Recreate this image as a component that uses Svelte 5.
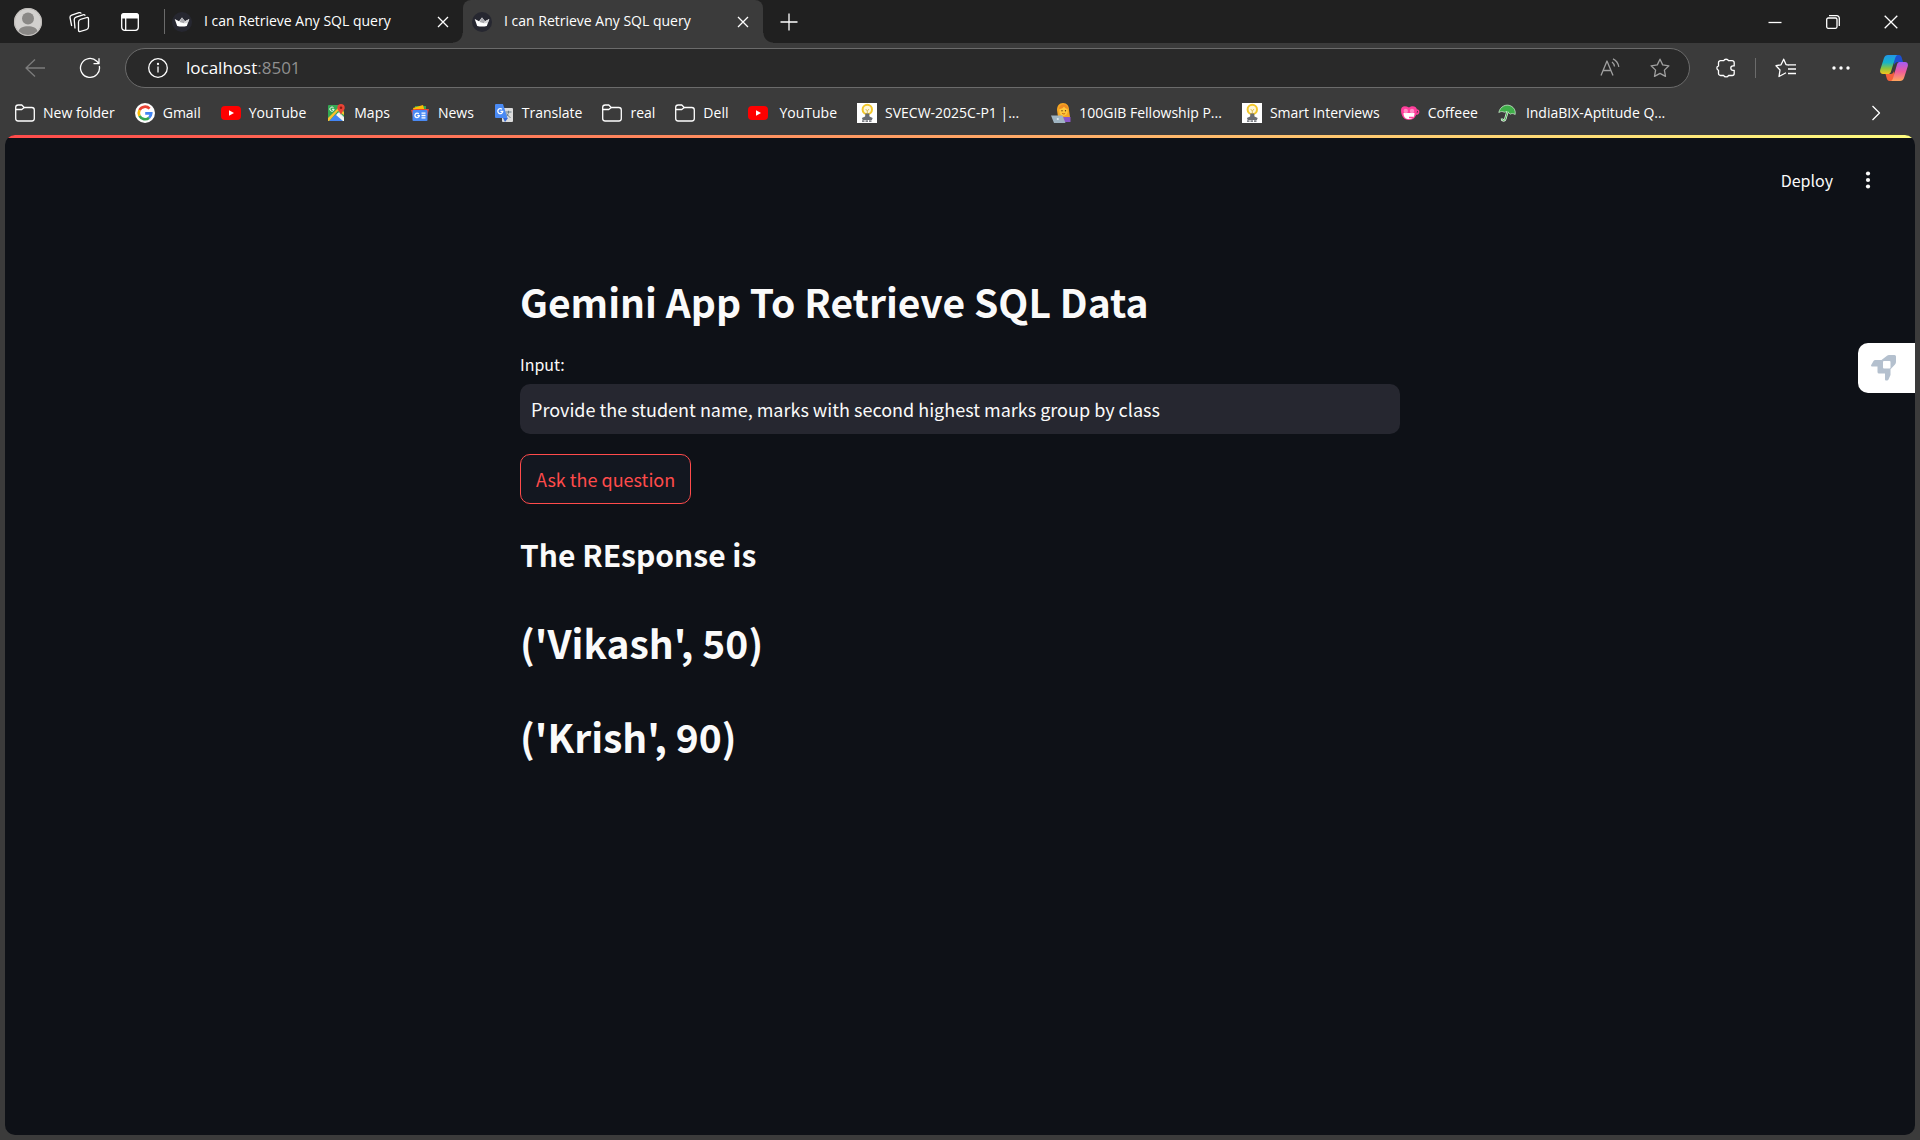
<script>
  let query = $state('Provide the student name, marks with second highest marks group by class');

  const tabs = [
    { title: 'I can Retrieve Any SQL query', active: false },
    { title: 'I can Retrieve Any SQL query', active: true }
  ];

  const bookmarks = [
    { icon: 'folder', label: 'New folder' },
    { icon: 'google', label: 'Gmail' },
    { icon: 'youtube', label: 'YouTube' },
    { icon: 'maps', label: 'Maps' },
    { icon: 'news', label: 'News' },
    { icon: 'translate', label: 'Translate' },
    { icon: 'folder', label: 'real' },
    { icon: 'folder', label: 'Dell' },
    { icon: 'youtube', label: 'YouTube', spaced: true },
    { icon: 'bulb', label: 'SVECW-2025C-P1 |...', wide: true },
    { icon: 'coder', label: '100GIB Fellowship P...' },
    { icon: 'bulb', label: 'Smart Interviews' },
    { icon: 'coffee', label: 'Coffeee' },
    { icon: 'umbrella', label: 'IndiaBIX-Aptitude Q...' }
  ];

  const rows = ["('Vikash', 50)", "('Krish', 90)"];
</script>

{#snippet close()}
  <svg width="12" height="12" viewBox="0 0 12 12" class="line"><path d="M1 1l10 10M11 1L1 11" /></svg>
{/snippet}

{#snippet crown()}
  <svg width="20" height="20" viewBox="0 0 20 20">
    <circle cx="10" cy="10" r="10" fill="#262730" />
    <path d="M2.700 7l4.300 2.200L10 5.500l3 3.700L17.300 7l-2.500 7c-3 .8-6.600.8-9.600 0z" fill="#fff" />
    <path d="M10 5.500l3 3.700-1 2-4.500-1.200z" fill="#a9a9ae" />
    <path d="M13 9.200L17.300 7l-1.300 3.800-4 .6z" fill="#d4d4d7" />
  </svg>
{/snippet}

{#snippet siteIcon(name)}
  <svg width="20" height="20" viewBox="0 0 20 20" aria-hidden="true">
    {#if name === 'folder'}
      <g class="line">
        <path d="M.7 4.500a2.500 2.500 0 0 1 2.500-2.500h3.600l2.400 2.500h7.600a2.500 2.500 0 0 1 2.500 2.500v8.500a2.500 2.500 0 0 1-2.500 2.500H3.200a2.500 2.500 0 0 1-2.500-2.500z" />
        <path d="M.7 6.500h6.100l2.400-2" />
      </g>
    {:else if name === 'google'}
      <circle cx="10" cy="10" r="10" fill="#fff" />
      <g fill="none" stroke-width="2.700">
        <path d="M14.600 5.700A6.200 6.200 0 0 0 4.500 7.200" stroke="#ea4335" />
        <path d="M4.500 7.200a6.200 6.200 0 0 0 0 5.700" stroke="#fbbc05" />
        <path d="M4.500 12.900a6.200 6.200 0 0 0 9.600 1.800" stroke="#34a853" />
        <path d="M14.100 14.700a6.200 6.200 0 0 0 2.100-4.300H10.200" stroke="#4285f4" />
      </g>
    {:else if name === 'youtube'}
      <rect y="3" width="20" height="14" rx="4" fill="#f00" />
      <path d="M8 7.200v5.600l5-2.800z" fill="#fff" />
    {:else if name === 'maps'}
      <rect x="2" y="2" width="16" height="16" rx="1" fill="#34a853" />
      <path d="M3 18l7-7 7 7z" fill="#4285f4" />
      <path d="M2 15L13 4l5 5v3L12 8 3 18H2z" fill="#fbc02d" />
      <path d="M11 11l2-2 5 5v3z" fill="#e8eaed" />
      <path d="M10 12l7 6h1v-2l-6-6z" fill="#f5f5f5" />
      <path d="M15 1a3.700 3.700 0 0 0-3.700 3.700c0 2.500 2.700 3.500 3.700 7.300 1-3.800 3.700-4.800 3.700-7.300A3.700 3.700 0 0 0 15 1z" fill="#ea4335" />
      <circle cx="15" cy="4.700" r="1.300" fill="#8e1c14" />
      <path d="M7.500 4.700a2.100 2.100 0 1 0 .6 1.600H6" fill="none" stroke="#fff" />
    {:else if name === 'news'}
      <path d="M5 3l11 0v6H5z" fill="#34a853" />
      <path d="M3 5l10-3 2 7H4z" fill="#fbbc04" />
      <path d="M1 7l5-1 10 0 3 0-2 8H3z" fill="#ea4335" />
      <rect x="2.500" y="7" width="15" height="11" rx="1" fill="#4a8af4" />
      <path d="M8.800 11a2.200 2.200 0 1 0 .5 1.700H7.300M11.500 10.200h4M11.500 12.500h4M11.500 14.800h4" fill="none" stroke="#fff" stroke-width="1.300" />
    {:else if name === 'translate'}
      <rect x="8" y="5" width="11" height="14" rx="1" fill="#dcdcdc" />
      <path d="M11.500 9h6M14.500 7.800V9c0 2-1.500 4-3 5M12.500 10.500c1 2 2.500 3.300 4 4" fill="none" stroke="#667b86" />
      <path d="M9 15h5l-3 4z" fill="#3367d6" />
      <path d="M2 1h7l4.500 14H2a1 1 0 0 1-1-1V2a1 1 0 0 1 1-1z" fill="#4a8af4" />
      <path d="M8 6.300a2.500 2.500 0 1 0 .8 2H6.400" fill="none" stroke="#fff" stroke-width="1.300" />
    {:else if name === 'bulb'}
      <rect width="20" height="20" fill="#fff" />
      <circle cx="10.300" cy="6.500" r="4.700" fill="#fdf6d8" stroke="#f2c72c" stroke-width="2" />
      <path d="M8.700 6l1.600 2L12 6M10.300 8v4" fill="none" stroke="#d9bd5c" />
      <path d="M8.400 10.500h3.800l.3 3 3.200 1.500-.8 2H5.700l-.8-2 3.200-1.500z" fill="#696c72" />
      <path d="M5 18.200h10.500" stroke="#808389" stroke-width="1.800" stroke-dasharray="2.500 1" />
    {:else if name === 'coder'}
      <path d="M12 0c4 0 6 3 6 7l1 7H7L6 7c0-4 2-7 6-7z" fill="#f5a623" />
      <path d="M11 14h8.500v5H11z" fill="#8b57c8" />
      <ellipse cx="12.500" cy="8" rx="4.200" ry="5" fill="#ffc83d" />
      <path d="M8 6c3 0 4-1 5-2.500 1 1.500 2 2.200 4 2.500 0-3-2-4.500-4.500-4.500S8 3 8 6z" fill="#ee8b22" />
      <circle cx="11" cy="7.700" r=".7" fill="#5c3a12" /><circle cx="14.500" cy="7.700" r=".7" fill="#5c3a12" />
      <path d="M11.200 10.300c1 .8 2 .8 3 0" fill="none" stroke="#b85b10" />
      <path d="M0 12.500h11.500l3 7.500H3z" fill="#9fb4c2" />
      <circle cx="6.800" cy="16" r="1.100" fill="#dceaf2" />
    {:else if name === 'coffee'}
      <path d="M1 7c0-4 4-5 8-2.500C12 2 17 3 17 7c0 6-3 10-8 10S1 13 1 7z" fill="#ff3f9c" />
      <path d="M16.500 7c3-.5 3 4-.8 4" fill="none" stroke="#ff3f9c" stroke-width="1.500" />
      <path d="M3.500 10h11c0 4-2 6-5.500 6s-5.500-2-5.500-6z" fill="#fff" />
      <circle cx="5.800" cy="8" r="2.200" fill="#ff8bc4" /><circle cx="12" cy="8" r="2.200" fill="#ff8bc4" />
      <path d="M9 14.500h4" stroke="#ff3f9c" stroke-width="1.500" />
    {:else if name === 'umbrella'}
      <path d="M.8 9.500C2 3.500 8 .5 13 3c3 1.500 4.800 4.500 4.200 8.500-2-1.200-3.700-1.200-5-.3-1.700-2-3.700-2.700-6-2-1.700-1-3.500-.8-5.400.3z" fill="#3fae49" stroke="#d9f0da" stroke-width=".7" />
      <path d="M9.500 8.500L7.300 16c-.6 2.200-3.400 1.800-3.300-.5" fill="none" stroke="#e8f5e8" stroke-width="2.400" />
      <path d="M9.500 8.500L7.300 16c-.6 2.200-3.400 1.800-3.300-.5" fill="none" stroke="#3fae49" />
    {/if}
  </svg>
{/snippet}

<div class="browser">
  <header class="strip">
    <button class="tool" aria-label="Profile">
      <svg width="28" height="28" viewBox="0 0 28 28">
        <circle cx="14" cy="14" r="14" fill="#d2d0ce" />
        <circle cx="14" cy="10.500" r="6" fill="#8a8886" />
        <path d="M4.500 23.500C5 16.500 23 16.500 23.500 23.500A14 14 0 0 1 4.500 23.500z" fill="#8a8886" />
        <circle cx="14" cy="14" r="13.500" fill="none" stroke="#bebbb8" />
      </svg>
    </button>
    <button class="tool" aria-label="Workspaces">
      <svg width="22" height="22" viewBox="0 0 22 22" class="line">
        <rect x="-5" y="-6" width="10" height="12" rx="2" transform="translate(15.500 13.500) skewY(-18)" />
        <path d="M7 17.500L6.200 8.500c0-1.300.6-2 1.800-2.400l7-2.300c1-.3 1.800 0 2.300.8" />
        <path d="M3.700 15L2 6.500c-.2-1.300.5-2 1.700-2.400L11 1.700c1-.3 1.800 0 2.300.8" />
      </svg>
    </button>
    <button class="tool" aria-label="Tab actions">
      <svg width="20" height="20" viewBox="0 0 20 20">
        <rect x="1.700" y="1.700" width="16.600" height="16.600" rx="3" class="line" />
        <path d="M1 6.500V4a3 3 0 0 1 3-3h12a3 3 0 0 1 3 3v2.500z" fill="#fff" />
        <path d="M5.700 6v12" class="line" />
      </svg>
    </button>
    <div class="tabs" role="tablist">
      {#each tabs as tab}
        <div class="tab" class:active={tab.active}>
          {@render crown()}
          <button class="title" role="tab" aria-selected={tab.active}>{tab.title}</button>
          <button class="shut" aria-label="Close tab">{@render close()}</button>
        </div>
      {/each}
    </div>
    <button class="new" aria-label="New tab">
      <svg width="18" height="18" viewBox="0 0 18 18" class="line"><path d="M9 .5v17M.5 9h17" /></svg>
    </button>
    <div class="controls">
      <button aria-label="Minimize"><svg width="14" height="14" viewBox="0 0 14 14" class="line"><path d="M.5 7.500h13" /></svg></button>
      <button aria-label="Restore">
        <svg width="14" height="14" viewBox="0 0 14 14" class="line">
          <rect x=".7" y="3" width="10.300" height="10.300" rx="1.500" />
          <path d="M3 .7h7.800a2.500 2.500 0 0 1 2.500 2.500V11" />
        </svg>
      </button>
      <button aria-label="Close"><svg width="14" height="14" viewBox="0 0 14 14" class="line"><path d="M.7.7l12.600 12.600M13.300.7L.7 13.300" /></svg></button>
    </div>
  </header>

  <nav class="toolbar">
    <button class="nav dim" aria-label="Back">
      <svg width="20" height="20" viewBox="0 0 20 20" class="line"><path d="M20 10H1M10 1.500L1 10l9 8.500" /></svg>
    </button>
    <button class="nav" aria-label="Reload">
      <svg width="22" height="22" viewBox="0 0 22 22" class="line"><path d="M20.300 9A9.500 9.500 0 1 1 17.800 4.300L20 6.500M20 1.200v5.500h-5.500" /></svg>
    </button>
    <div class="address">
      <svg width="20" height="20" viewBox="0 0 20 20" class="line">
        <circle cx="10" cy="10" r="9.300" />
        <path d="M10 8.500V14.500" /><circle cx="10" cy="6" r=".5" />
      </svg>
      <a href="#top">localhost<span>:8501</span></a>
      <button aria-label="Read aloud">
        <svg width="20" height="20" viewBox="0 0 20 20" class="line">
          <path d="M1 17.500L7 3l6 14.500M3.300 12.500h7.500M12 4c1.300 1 2.300 2.500 2.500 4.500M13 .8c3 1.400 5.200 4.500 5.800 8" />
        </svg>
      </button>
      <button aria-label="Add to favorites">
        <svg width="20" height="20" viewBox="0 0 20 20" class="line">
          <path d="M10 1.200l2.700 5.700 6.200.9-4.500 4.300 1.100 6.300L10 15.400l-5.500 3 1.100-6.300L1.100 7.800l6.200-.9z" />
        </svg>
      </button>
    </div>
    <button class="nav" aria-label="Extensions">
      <svg width="20" height="20" viewBox="0 0 20 20" class="line">
        <path d="M4.500 2.700h3.200a2.500 2 0 0 1 4.800 0h3.700a2 2 0 0 1 2 2v3.200h-1.200a2.200 2.200 0 0 0 0 4.400h1.200v3.200a2 2 0 0 1-2 2h-3.700a2.500 2 0 0 1-4.800 0H4.500a2 2 0 0 1-2-2v-3.200a2.300 2.300 0 0 1 0-4.400V4.700a2 2 0 0 1 2-2z" />
      </svg>
    </button>
    <i class="rule"></i>
    <button class="nav" aria-label="Favorites">
      <svg width="22" height="20" viewBox="0 0 22 20" class="line">
        <path d="M14 7l-3-.4L8.700 1.200 6 6.800l-5 .9 4 4.300-1 6.500 7-3.700M13.500 6.800h7.500M13 11h8M13 15.500h8" />
      </svg>
    </button>
    <button class="nav" aria-label="Settings and more">
      <svg width="18" height="4" viewBox="0 0 18 4" fill="#fff"><circle cx="2" cy="2" r="1.700" /><circle cx="9" cy="2" r="1.700" /><circle cx="16" cy="2" r="1.700" /></svg>
    </button>
    <button class="nav copilot" aria-label="Copilot">
      <svg width="28" height="26" viewBox="0 0 28 26">
        <defs>
          <linearGradient id="cool" x1="0" y1="0" x2="0" y2="1">
            <stop offset="0" stop-color="#2196e8" /><stop offset=".4" stop-color="#17b4c8" /><stop offset=".7" stop-color="#8ac43f" /><stop offset="1" stop-color="#f5c51c" />
          </linearGradient>
          <linearGradient id="warm" x1="0" y1="0" x2="0" y2="1">
            <stop offset="0" stop-color="#a35cf5" /><stop offset=".5" stop-color="#ee5b9c" /><stop offset="1" stop-color="#ffa65c" />
          </linearGradient>
        </defs>
        <path d="M12 0h7c1.500 0 2.200 1 2.700 2.500L23 7h-5c-2 0-3 1-3.500 3z" fill="#1d4fd0" />
        <path d="M16 26H9.500c-1.500 0-2.200-1-2.700-2.500L5.500 19h5c2 0 3-1 3.500-3z" fill="#f4603a" />
        <path d="M8 0h10c-1.500.3-2.300 1.400-2.800 3L11 16.500c-.6 2-1.500 2.500-3.500 2.500H3c-2.500 0-3.400-2-2.700-4.500L4 3C4.700 1 6 0 8 0z" fill="url(#cool)" />
        <path d="M20 26H10.500c1.500-.3 2.100-1.400 2.600-3L17 9.500C17.600 7.500 18.500 7 20.500 7H25c2.500 0 3.400 2 2.700 4.500L24 23c-.7 2-2 3-4 3z" fill="url(#warm)" />
      </svg>
    </button>
  </nav>

  <nav class="bookmarks">
    {#each bookmarks as mark}
      <a href="#top" class:spaced={mark.spaced} class:wide={mark.wide}>{@render siteIcon(mark.icon)}<span>{mark.label}</span></a>
    {/each}
    <button class="more" aria-label="More bookmarks">
      <svg width="10" height="16" viewBox="0 0 10 16" class="line"><path d="M1.500 1l7 7-7 7" /></svg>
    </button>
  </nav>

  <div class="page" id="top">
    <div class="appbar">
      <button>Deploy</button>
      <button class="dots" aria-label="Main menu">
        <svg width="6" height="18" viewBox="0 0 6 18" fill="#fafafa"><circle cx="3" cy="2.500" r="2.100" /><circle cx="3" cy="9" r="2.100" /><circle cx="3" cy="15.500" r="2.100" /></svg>
      </button>
    </div>
    <main>
      <h1>Gemini App To Retrieve SQL Data</h1>
      <label for="query">Input:</label>
      <input id="query" type="text" bind:value={query} />
      <button class="ask">Ask the question</button>
      <h2>The REsponse is</h2>
      {#each rows as row}
        <h1>{row}</h1>
      {/each}
    </main>
    <button class="rocket" aria-label="Launch assistant">
      <svg width="26" height="26" viewBox="0 0 26 26">
        <path fill-rule="evenodd" d="M18 0h5.500A1.500 1.500 0 0 1 25 1.500V7c0 1-.3 1.700-1 2.500l-4.500 4.800V20l-2 4.500c-.3.700-.8 1-1.500 1h-.8c-.7 0-1.200-.4-1.200-1.200V18.500H8a1.500 1.500 0 0 1-1.500-1.500v-5.500H1c-.9 0-1.200-.8-.8-1.500l2.300-4c.4-.7 1-1 1.800-1h6.200L16 .8c.6-.6 1.200-.8 2-.8zM13 6a1 1 0 0 0-1 1v5.500a1 1 0 0 0 1 1h5.500a1 1 0 0 0 1-1V7a1 1 0 0 0-1-1z" fill="#b4c0ce" />
      </svg>
    </button>
  </div>
</div>

<style>
  :global(body) {
    margin: 0;
    background: #3b3b3b;
  }
  .browser {
    min-height: 100vh;
    display: flex;
    flex-direction: column;
    background: #3b3b3b;
    color: #fff;
    font: 14px/20px "Open Sans", "Noto Sans", sans-serif;
  }
  button {
    display: flex;
    align-items: center;
    justify-content: center;
    padding: 0;
    border: 0;
    background: none;
    color: inherit;
    font: inherit;
  }
  a {
    color: inherit;
    text-decoration: none;
  }
  svg {
    display: block;
    flex: none;
  }
  .line {
    fill: none;
    stroke: currentColor;
    stroke-width: 1.3;
    stroke-linejoin: round;
  }

  .strip {
    display: flex;
    height: 43px;
    padding-left: 2px;
    background: #202020;
  }
  .tool {
    width: 51px;
  }
  .tabs {
    display: flex;
    margin-left: 8px;
  }
  .tab {
    position: relative;
    display: flex;
    align-items: center;
    gap: 12px;
    box-sizing: border-box;
    width: 300px;
    padding: 0 10px 0 9px;
  }
  .tab:first-child::before {
    content: '';
    position: absolute;
    left: 1px;
    top: 9px;
    width: 1px;
    height: 25px;
    background: #6b6b6b;
  }
  .tab.active {
    background: #3b3b3b;
    border-radius: 8px 8px 0 0;
  }
  .tab.active::before,
  .tab.active::after {
    content: '';
    position: absolute;
    bottom: 0;
    width: 10px;
    height: 10px;
  }
  .tab.active::before {
    right: 100%;
    background: radial-gradient(circle at 0 0, #202020 9px, #3b3b3b 10px);
  }
  .tab.active::after {
    left: 100%;
    background: radial-gradient(circle at 100% 0, #202020 9px, #3b3b3b 10px);
  }
  .title {
    flex: 1;
    justify-content: flex-start;
    padding-bottom: 2px;
    white-space: nowrap;
  }
  .shut {
    width: 20px;
    height: 20px;
  }
  .new {
    width: 52px;
  }
  .controls {
    display: flex;
    margin-left: auto;
  }
  .controls button {
    width: 58px;
  }

  .toolbar {
    display: flex;
    align-items: center;
    height: 50px;
    padding-left: 7px;
  }
  .nav {
    width: 55px;
    height: 40px;
  }
  .copilot {
    width: 52px;
  }
  .dim {
    color: #7c7c7c;
  }
  .address {
    flex: 1;
    display: flex;
    align-items: center;
    box-sizing: border-box;
    height: 40px;
    margin: 0 8px;
    padding: 0 4px 0 22px;
    border: 1px solid #6b6b6b;
    border-radius: 20px;
    background: #292929;
  }
  .address a {
    flex: 1;
    margin-left: 18px;
    font-size: 17px;
  }
  .address a span {
    color: #8f8f8f;
  }
  .address button {
    width: 50px;
    height: 36px;
    color: #a0a0a0;
  }
  .rule {
    width: 1px;
    height: 20px;
    margin: 0 2px;
    background: #6b6b6b;
  }

  .bookmarks {
    display: flex;
    align-items: center;
    gap: 20px;
    box-sizing: border-box;
    height: 42px;
    padding: 0 39px 2px 15px;
    white-space: nowrap;
  }
  .bookmarks a {
    display: flex;
    align-items: center;
    gap: 8px;
  }
  .bookmarks .spaced {
    gap: 11px;
  }
  .bookmarks .wide {
    padding-right: 12px;
  }
  .more {
    margin-left: auto;
  }

  .page {
    position: relative;
    flex: 1;
    margin: 0 5px 5px;
    border-radius: 10px;
    overflow: hidden;
    background: #0e1117;
    color: #fafafa;
    font-family: "Noto Sans CJK SC", "Noto Sans CJK JP", sans-serif;
  }
  .page::before {
    content: '';
    display: block;
    height: 3px;
    background: linear-gradient(90deg, #ff4b4b, #fffd80);
  }
  .appbar {
    display: flex;
    align-items: center;
    justify-content: flex-end;
    gap: 32px;
    height: 84px;
    padding-right: 44px;
    font-size: 16px;
  }
  main {
    display: flex;
    flex-direction: column;
    align-items: flex-start;
    box-sizing: border-box;
    max-width: 880px;
    margin: 0 auto;
    padding: 32px 0 80px;
  }
  h1 {
    margin: 0;
    padding: 20px 0;
    font-size: 39px;
    line-height: 54px;
    font-weight: 600;
  }
  h2 {
    margin: 29px 0 20px;
    font-size: 30px;
    line-height: 42px;
    font-weight: 600;
  }
  label {
    margin: 4px 0 8px;
    font-size: 16px;
    line-height: 24px;
  }
  input {
    box-sizing: border-box;
    width: 100%;
    height: 50px;
    margin: 0 0 20px;
    padding: 0 11px;
    border: 0;
    border-radius: 10px;
    background: #262730;
    color: inherit;
    font: 18px "Noto Sans CJK SC", "Noto Sans CJK JP", sans-serif;
  }
  .ask {
    height: 50px;
    padding: 0 15px;
    border: 1px solid #ff4b4b;
    border-radius: 10px;
    background: #131720;
    color: #ff4b4b;
    font-size: 18px;
  }
  .rocket {
    position: absolute;
    right: 0;
    top: 208px;
    width: 57px;
    height: 50px;
    padding-right: 6px;
    border-radius: 10px 0 0 10px;
    background: #fff;
  }
</style>
